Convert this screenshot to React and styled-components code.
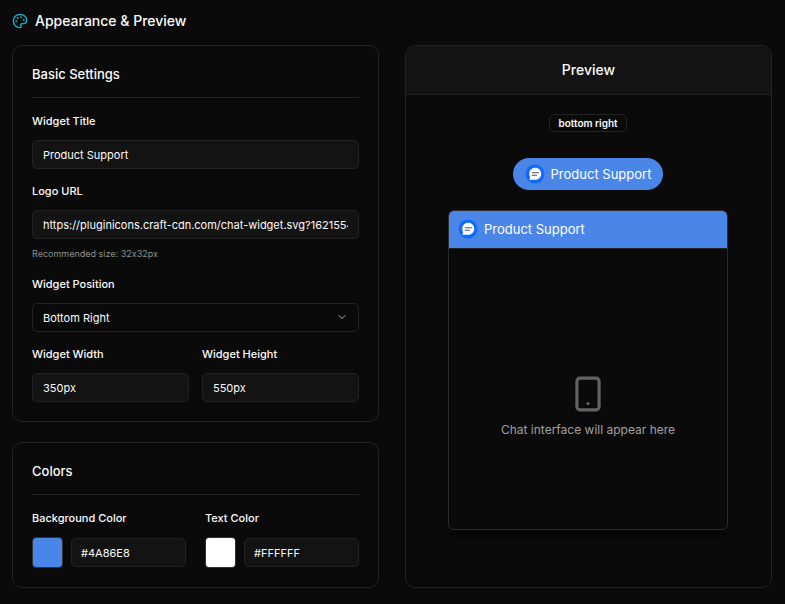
import { useState } from "react";
import styled, { createGlobalStyle } from "styled-components";
import { ChevronDown, Palette, Smartphone } from "lucide-react";

const ChatLogo = ({ size }) => (
  <svg width={size} height={size} viewBox="0 0 40 40" aria-hidden="true">
    <circle cx="20" cy="20" r="19" fill="#0f6bff" />
    <path
      d="M20.5 7.5C27.4 7.5 32.5 12.8 32.5 19.5S27.4 31.5 20.5 31.5H8.5L10.4 27C9.2 24.8 8.5 22.2 8.5 19.5C8.5 12.8 13.6 7.5 20.5 7.5Z"
      fill="#fff"
    />
    <path d="M14.5 17.5H27M14.5 22.5H23" stroke="#4b5563" strokeWidth="2.4" strokeLinecap="round" />
  </svg>
);

const ColorField = ({ id, label, value, onChange }) => (
  <Field>
    <Label htmlFor={id}>{label}</Label>
    <ColorRow>
      <Swatch type="color" aria-label={label} value={value} onChange={(e) => onChange(e.target.value.toUpperCase())} />
      <Input id={id} $padding="9px" value={value} onChange={(e) => onChange(e.target.value)} />
    </ColorRow>
  </Field>
);

const App = () => {
  const [title, setTitle] = useState("Product Support");
  const [logo, setLogo] = useState("https://pluginicons.craft-cdn.com/chat-widget.svg?1621554496");
  const [position, setPosition] = useState("bottom-right");
  const [width, setWidth] = useState("350px");
  const [height, setHeight] = useState("550px");
  const [background, setBackground] = useState("#4A86E8");
  const [color, setColor] = useState("#FFFFFF");

  return (
    <>
      <GlobalStyle />
      <Page>
        <PageTitle>
          <Palette size={16} color="#12b5cb" />
          Appearance &amp; Preview
        </PageTitle>
        <Columns>
          <Settings>
            <Card>
              <CardTitle>Basic Settings</CardTitle>
              <Fields>
                <Field>
                  <Label htmlFor="title">Widget Title</Label>
                  <Input id="title" value={title} onChange={(e) => setTitle(e.target.value)} />
                </Field>
                <Field>
                  <Label htmlFor="logo">Logo URL</Label>
                  <Input id="logo" value={logo} onChange={(e) => setLogo(e.target.value)} />
                  <Hint>Recommended size: 32x32px</Hint>
                </Field>
                <Field>
                  <Label htmlFor="position">Widget Position</Label>
                  <SelectBox>
                    <Select id="position" value={position} onChange={(e) => setPosition(e.target.value)}>
                      <option value="bottom-right">Bottom Right</option>
                      <option value="bottom-left">Bottom Left</option>
                    </Select>
                    <ChevronDown size={12} />
                  </SelectBox>
                </Field>
                <Pair $gap="13px">
                  <Field>
                    <Label htmlFor="width">Widget Width</Label>
                    <Input id="width" value={width} onChange={(e) => setWidth(e.target.value)} />
                  </Field>
                  <Field>
                    <Label htmlFor="height">Widget Height</Label>
                    <Input id="height" value={height} onChange={(e) => setHeight(e.target.value)} />
                  </Field>
                </Pair>
              </Fields>
            </Card>
            <Card>
              <CardTitle>Colors</CardTitle>
              <Pair $gap="19px">
                <ColorField id="background" label="Background Color" value={background} onChange={setBackground} />
                <ColorField id="color" label="Text Color" value={color} onChange={setColor} />
              </Pair>
            </Card>
          </Settings>
          <Preview>
            <PreviewTitle>Preview</PreviewTitle>
            <PreviewBody>
              <Badge>{position.replace("-", " ")}</Badge>
              <Launcher type="button" $background={background} $color={color}>
                <ChatLogo size={20} />
                {title}
              </Launcher>
              <Widget>
                <WidgetHeader $background={background} $color={color}>
                  <ChatLogo size={20} />
                  {title}
                </WidgetHeader>
                <WidgetBody>
                  <Smartphone size={38} color="#636363" />
                  <p>Chat interface will appear here</p>
                </WidgetBody>
              </Widget>
            </PreviewBody>
          </Preview>
        </Columns>
      </Page>
    </>
  );
};

const GlobalStyle = createGlobalStyle`
  * {
    box-sizing: border-box;
  }
  body {
    margin: 0;
    background-color: #0a0a0a;
    color: #fafafa;
    font-family: Inter, "Liberation Sans", sans-serif;
    font-feature-settings: "calt" 0;
  }
  h1, h2, p {
    margin: 0;
  }
  input, select, button {
    font-family: inherit;
  }
`;

const Page = styled.main`
  padding: 11px 13px 16px 12px;
`;

const PageTitle = styled.h1`
  display: flex;
  align-items: center;
  gap: 7px;
  margin-bottom: 14px;
  font-size: 14px;
  font-weight: 500;
  line-height: 20px;
`;

const Columns = styled.div`
  display: grid;
  grid-template-columns: 1fr 1fr;
  gap: 26px;
`;

const Settings = styled.div`
  display: flex;
  flex-direction: column;
  gap: 20px;
  min-width: 0;
`;

const Card = styled.section`
  padding: 19px;
  border: 1px solid #232323;
  border-radius: 10px;
`;

const CardTitle = styled.h2`
  margin-bottom: 15px;
  padding-bottom: 14px;
  border-bottom: 1px solid #232323;
  font-size: 13px;
  font-weight: 500;
  line-height: 18px;
`;

const Fields = styled.div`
  display: flex;
  flex-direction: column;
  gap: 14px;
`;

const Field = styled.div`
  display: flex;
  flex-direction: column;
  min-width: 0;
`;

const Pair = styled.div`
  display: grid;
  grid-template-columns: 1fr 1fr;
  gap: ${({ $gap }) => $gap};
`;

const Label = styled.label`
  margin-bottom: 11px;
  font-size: 11px;
  font-weight: 500;
  line-height: 16px;
`;

const Input = styled.input`
  width: 100%;
  min-width: 0;
  height: 29px;
  padding: 0 ${({ $padding }) => $padding || "10px"};
  border: 1px solid #232323;
  border-radius: 5px;
  background-color: #131313;
  color: #fafafa;
  font-size: 11px;
`;

const Hint = styled.p`
  margin-top: 7px;
  color: #8f8f8f;
  font-size: 9px;
  line-height: 16px;
`;

const SelectBox = styled.div`
  position: relative;
  svg {
    position: absolute;
    top: 8px;
    right: 11px;
    color: #b4b4b4;
    pointer-events: none;
  }
`;

const Select = styled.select`
  display: block;
  width: 100%;
  height: 29px;
  padding: 0 10px;
  border: 1px solid #232323;
  border-radius: 5px;
  background-color: #0a0a0a;
  color: #fafafa;
  font-size: 11px;
  appearance: none;
`;

const ColorRow = styled.div`
  display: flex;
  align-items: center;
  gap: 8px;
`;

const Swatch = styled.input`
  flex-shrink: 0;
  width: 31px;
  height: 31px;
  padding: 0;
  border: 1px solid #333333;
  border-radius: 4px;
  background: none;
  appearance: none;
  overflow: hidden;
  &::-webkit-color-swatch-wrapper {
    padding: 0;
  }
  &::-webkit-color-swatch {
    border: none;
  }
`;

const Preview = styled.section`
  border: 1px solid #232323;
  border-radius: 10px;
  overflow: hidden;
`;

const PreviewTitle = styled.h2`
  padding: 14px;
  border-bottom: 1px solid #232323;
  background-color: #131313;
  font-size: 14px;
  font-weight: 500;
  line-height: 20px;
  text-align: center;
`;

const PreviewBody = styled.div`
  display: flex;
  flex-direction: column;
  align-items: center;
  padding: 19px 21px 18px 20px;
`;

const Badge = styled.span`
  margin-bottom: 26px;
  padding: 0 8px;
  border: 1px solid #232323;
  border-radius: 5px;
  font-size: 10px;
  font-weight: 600;
  line-height: 16px;
`;

const Launcher = styled.button`
  display: flex;
  align-items: center;
  gap: 6px;
  height: 32px;
  margin-bottom: 20px;
  padding: 0 12px;
  border: none;
  border-radius: 16px;
  background-color: ${({ $background }) => $background};
  color: ${({ $color }) => $color};
  font-size: 13px;
  font-weight: 400;
  cursor: pointer;
`;

const Widget = styled.div`
  display: flex;
  flex-direction: column;
  width: 100%;
  max-width: 280px;
  min-height: 320px;
  border: 1px solid #2b2b2b;
  border-radius: 6px;
  box-shadow: 0 8px 6px -3px rgba(0, 0, 0, 0.4);
  overflow: hidden;
`;

const WidgetHeader = styled.div`
  display: flex;
  align-items: center;
  gap: 6px;
  height: 38px;
  padding: 0 10px 2px 9px;
  border-bottom: 1px solid #232323;
  background-color: ${({ $background }) => $background};
  color: ${({ $color }) => $color};
  font-size: 13px;
  font-weight: 400;
`;

const WidgetBody = styled.div`
  display: flex;
  flex: 1;
  flex-direction: column;
  align-items: center;
  justify-content: center;
  gap: 8px;
  padding-top: 35px;
  color: #a1a1a1;
  font-size: 12px;
  line-height: 18px;
`;

export default App;
